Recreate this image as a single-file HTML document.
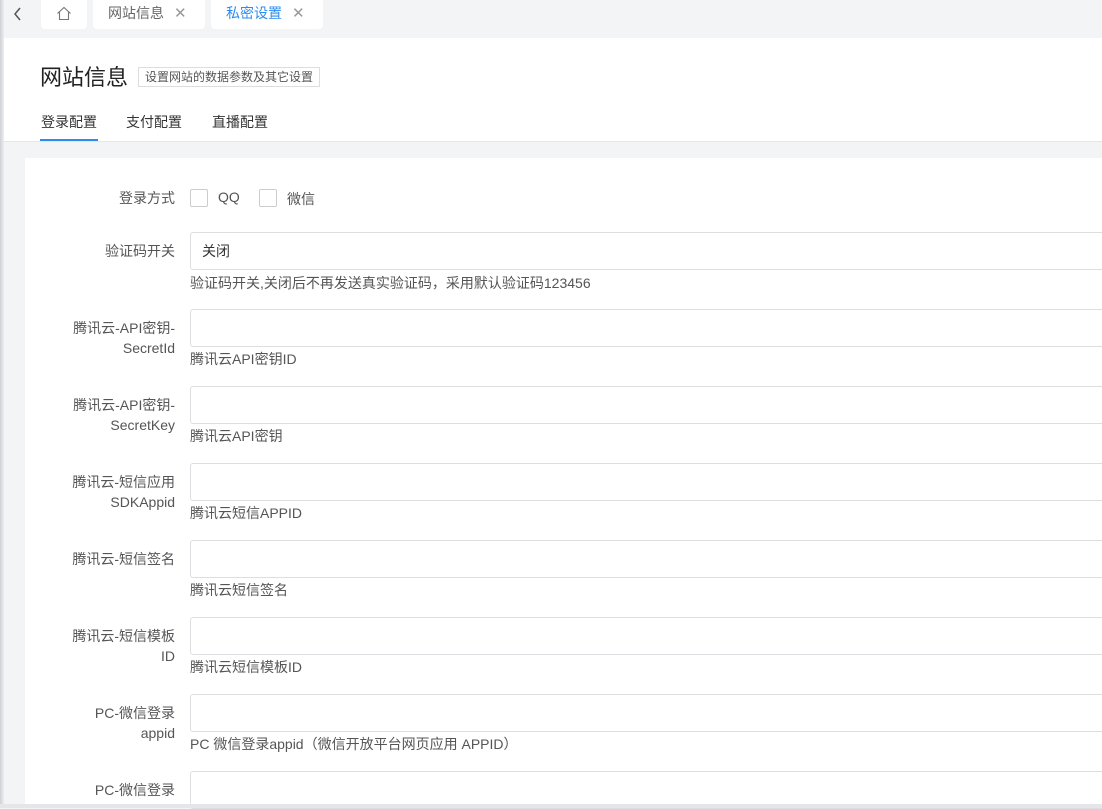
<!DOCTYPE html>
<html><head><meta charset="utf-8"><style>
*{box-sizing:border-box;margin:0;padding:0}
body{width:1102px;height:808px;overflow:hidden;background:#f3f4f6;font-family:"Liberation Sans","Noto Sans CJK SC",sans-serif;position:relative;color:#333}
.lb{position:absolute;left:0;top:0;width:4px;height:808px;background:linear-gradient(to right,#cfd1d4,#eceef0)}
.tab{position:absolute;top:0;height:29px;background:#fff;border-radius:0 0 4px 4px;font-size:14px;line-height:27px;color:#666}
.x{color:#999;margin-left:10px;font-size:15px}
.hdr{position:absolute;left:4px;top:38px;right:0;height:104px;background:#fff;border-bottom:1px solid #e4e6e9}
.title{position:absolute;left:36px;top:22px;font-size:22px;color:#222}
.sub{position:absolute;left:134px;top:29px;border:1px solid #ddd;font-size:12px;padding:0 6px;height:20px;line-height:18px;color:#555}
.nav{position:absolute;top:74px;font-size:14px;color:#333}
.ul{position:absolute;left:36px;top:101px;width:58px;height:2px;background:#2d8cf0}
.card{position:absolute;left:25px;top:158px;right:0;bottom:0;background:#fff}
.lab{position:absolute;right:927px;width:140px;text-align:right;font-size:14px;line-height:20px;color:#555}
.inp{position:absolute;left:190px;width:930px;height:38px;border:1px solid #dcdee2;border-radius:3px;background:#fff;font-size:14px;padding-left:11px;line-height:36px;color:#333}
.help{position:absolute;left:190px;font-size:14px;color:#555}
.cb{position:absolute;top:189px;width:18px;height:18px;border:1px solid #ccc;border-radius:2px}
</style></head><body>
<div class="lb"></div>
<svg style="position:absolute;left:12px;top:7px" width="12" height="14" viewBox="0 0 12 14"><path d="M8 1L3 7l5 6" fill="none" stroke="#555" stroke-width="1.5"/></svg>
<div class="tab" style="left:41px;width:46px"><svg style="position:absolute;left:15px;top:6px" width="16" height="15" viewBox="0 0 16 15"><path d="M1.5 7.5L8 1.5l6.5 6M3.5 6v7.5h9V6" fill="none" stroke="#777" stroke-width="1.1"/></svg></div>
<div class="tab" style="left:93px;width:112px;padding-left:15px">网站信息<span class="x">✕</span></div>
<div class="tab" style="left:211px;width:112px;padding-left:15px;color:#2d8cf0">私密设置<span class="x">✕</span></div>
<div class="hdr">
<div class="title">网站信息</div>
<div class="sub">设置网站的数据参数及其它设置</div>
<div class="nav" style="left:37px">登录配置</div>
<div class="nav" style="left:122px">支付配置</div>
<div class="nav" style="left:208px">直播配置</div>
<div class="ul"></div>
</div>
<div class="card"></div>
<div class="lab" style="top:188px">登录方式</div>
<div class="cb" style="left:190px"></div><div style="position:absolute;left:218px;top:189px;font-size:14px;color:#555">QQ</div>
<div class="cb" style="left:259px"></div><div style="position:absolute;left:287px;top:189px;font-size:14px;color:#555">微信</div>

<div class="lab" style="top:241px">验证码开关</div>
<div class="inp" style="top:232px">关闭</div>
<div class="help" style="top:273px">验证码开关,关闭后不再发送真实验证码，采用默认验证码123456</div>

<div class="lab" style="top:318px">腾讯云-API密钥-<br>SecretId</div>
<div class="inp" style="top:309px"></div>
<div class="help" style="top:349px">腾讯云API密钥ID</div>

<div class="lab" style="top:395px">腾讯云-API密钥-<br>SecretKey</div>
<div class="inp" style="top:386px"></div>
<div class="help" style="top:426px">腾讯云API密钥</div>

<div class="lab" style="top:472px">腾讯云-短信应用<br>SDKAppid</div>
<div class="inp" style="top:463px"></div>
<div class="help" style="top:503px">腾讯云短信APPID</div>

<div class="lab" style="top:549px">腾讯云-短信签名</div>
<div class="inp" style="top:540px"></div>
<div class="help" style="top:580px">腾讯云短信签名</div>

<div class="lab" style="top:626px">腾讯云-短信模板<br>ID</div>
<div class="inp" style="top:617px"></div>
<div class="help" style="top:657px">腾讯云短信模板ID</div>

<div class="lab" style="top:703px">PC-微信登录<br>appid</div>
<div class="inp" style="top:694px"></div>
<div class="help" style="top:734px">PC 微信登录appid（微信开放平台网页应用 APPID）</div>

<div class="lab" style="top:780px">PC-微信登录</div>
<div class="inp" style="top:771px"></div>
<div style="position:absolute;left:0;right:0;top:804px;height:4px;background:#e4e6e9"></div>
</body></html>
